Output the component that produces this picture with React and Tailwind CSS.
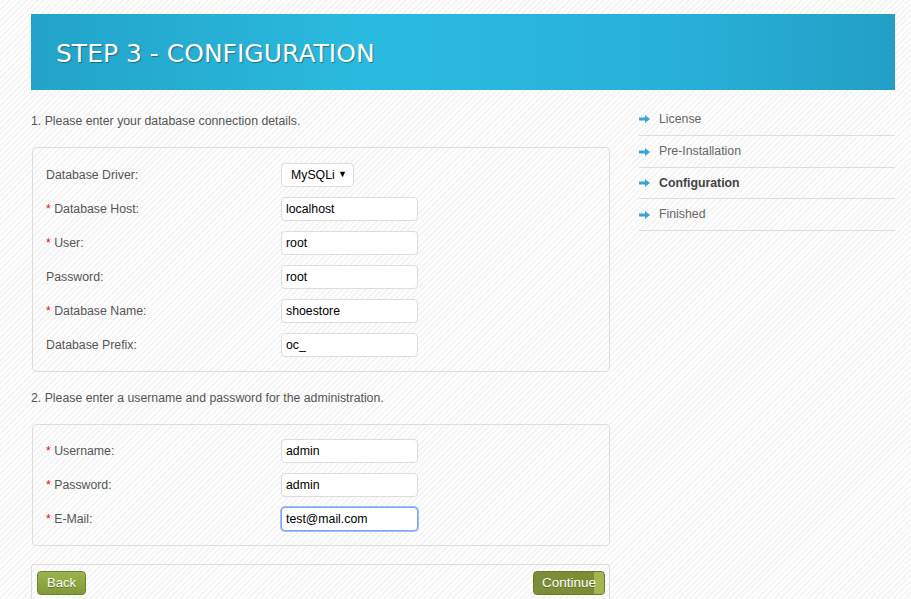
import { useState } from 'react'

const stripes =
  'bg-[repeating-linear-gradient(135deg,#ffffff_0px,#ffffff_2px,#f5f5f5_2px,#f5f5f5_4px)]'

function Arrow() {
  return (
    <svg width="11" height="8" viewBox="0 0 11 8" className="shrink-0">
      <path d="M0 2.5h6V0l5 4-5 4V5.5H0z" fill="#3aa2dc" />
    </svg>
  )
}

function Field({ label, required, value, focused }) {
  return (
    <div className="flex items-center h-[34px]">
      <div className="w-[235px] text-[12.3px] text-[#555]">
        {required && <span className="text-[#f00]">* </span>}
        {label}
      </div>
      <input
        defaultValue={value}
        className={`w-[137px] h-[24px] px-[4px] text-[12.3px] text-black bg-white rounded-[4px] outline-none border ${
          focused ? 'border-[#7aa7f0] ring-1 ring-[#9ec0f5]' : 'border-[#ddd]'
        }`}
      />
    </div>
  )
}

export default function App() {
  const [driver] = useState('MySQLi')
  const steps = [
    { name: 'License', h: 'h-[33px]' },
    { name: 'Pre-Installation', h: 'h-[32px]' },
    { name: 'Configuration', h: 'h-[31px]' },
    { name: 'Finished', h: 'h-[32px]' },
  ]

  return (
    <div
      className={`w-[911px] h-[599px] overflow-hidden ${stripes}`}
      style={{ fontFamily: '"Liberation Sans", Arial, sans-serif' }}
    >
      <div className="pt-[14px] pl-[31px] w-[895px]">
        {/* Header */}
        <div className="h-[76px] flex items-center pl-[25px] pt-[3px] bg-[linear-gradient(90deg,#23a3c8_0%,#2bbbe0_40%,#28b0d8_75%,#239fc6_100%)]">
          <h1
            className="text-[25px] text-white [text-shadow:1px_1px_1px_rgba(0,0,0,0.35)]"
            style={{ fontFamily: '"DejaVu Sans", Verdana, sans-serif' }}
          >
            STEP 3 - CONFIGURATION
          </h1>
        </div>

        <div className="flex">
          {/* Left column */}
          <div className="w-[579px]">
            <p className="text-[12.3px] text-[#555] mt-[22px] h-[15px]">
              1. Please enter your database connection details.
            </p>
            <div className="mt-[20px] ml-[1px] border border-[#ddd] rounded-[4px] pl-[13px] pt-[10px] pb-[9px]">
              <div className="flex items-center h-[34px]">
                <div className="w-[235px] text-[12.3px] text-[#555]">Database Driver:</div>
                <div className="w-[73px] h-[24px] flex items-center justify-between pl-[9px] pr-[6px] bg-white border border-[#ddd] rounded-[4px] text-[12.3px] text-black">
                  <span>{driver}</span>
                  <span className="text-[9px]">▼</span>
                </div>
              </div>
              <Field label="Database Host:" required value="localhost" />
              <Field label="User:" required value="root" />
              <Field label="Password:" value="root" />
              <Field label="Database Name:" required value="shoestore" />
              <Field label="Database Prefix:" value="oc_" />
            </div>

            <p className="text-[12.3px] text-[#555] mt-[17px] h-[15px]">
              2. Please enter a username and password for the administration.
            </p>
            <div className="mt-[20px] ml-[1px] border border-[#ddd] rounded-[4px] pl-[13px] pt-[9px] pb-[9px]">
              <Field label="Username:" required value="admin" />
              <Field label="Password:" required value="admin" />
              <Field label="E-Mail:" required value="test@mail.com" focused />
            </div>

            {/* Buttons */}
            <div className="mt-[18px] border border-[#ddd] rounded-[2px] flex justify-between pl-[5px] pr-[4px] pt-[6px] pb-[6px]">
              <button className="h-[24px] px-[9px] text-[13px] text-white rounded-[4px] border border-[#6e8230] bg-[linear-gradient(#9cb44c,#809a37)] [text-shadow:0_1px_0_rgba(0,0,0,0.3)]">
                Back
              </button>
              <button className="h-[24px] px-[8px] text-[13.5px] text-white rounded-[4px] border border-[#6a7a2c] bg-[linear-gradient(90deg,#7d8f36_0%,#7b8d34_85%,#a3b64f_86%,#a3b64f_100%)] [text-shadow:0_1px_0_rgba(0,0,0,0.3)]">
                Continue
              </button>
            </div>
          </div>

          {/* Right column */}
          <ul className="ml-[29px] w-[256px] pt-[13px]">
            {steps.map((s) => (
              <li
                key={s.name}
                className={`flex items-center gap-[9px] border-b border-[#ddd] text-[12.3px] ${s.h} ${
                  s.name === 'Configuration' ? 'font-bold text-[#444]' : 'text-[#666]'
                }`}
              >
                <Arrow />
                <span>{s.name}</span>
              </li>
            ))}
          </ul>
        </div>
      </div>
    </div>
  )
}
